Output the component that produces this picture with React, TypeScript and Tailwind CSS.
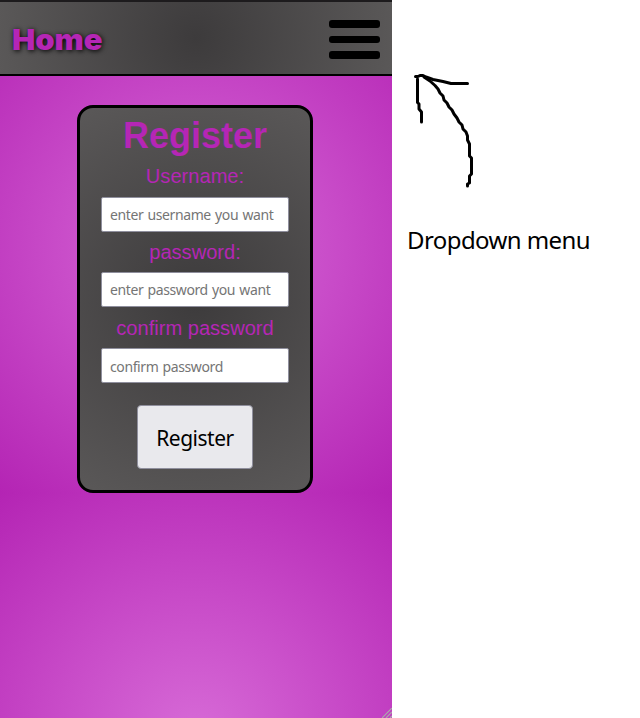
import React from "react";

function Field({
  label,
  placeholder,
  className,
  inputClass,
}: {
  label: string;
  placeholder: string;
  className: string;
  inputClass: string;
}) {
  return (
    <label className={`flex w-[188px] flex-col items-center ${className}`}>
      <span className="whitespace-nowrap text-[20.1px] leading-[23px] text-[#b526b5]">{label}</span>
      <input
        placeholder={placeholder}
        className={`h-[35px] w-full rounded-[2px] border border-[#8f8f9d] bg-white px-2 font-['Noto_Sans',sans-serif] text-[14px] tracking-[-0.4px] [word-spacing:1px] placeholder:text-[#757575] ${inputClass}`}
      />
    </label>
  );
}

export default function App() {
  return (
    <div className="flex h-[718px] w-[640px] overflow-hidden bg-white font-['Liberation_Sans',Arial,sans-serif]">
      <main className="relative h-full w-[392px] shrink-0 bg-[radial-gradient(circle,#d76bd7_0%,#c84bc8_45%,#b424b4_100%)] bg-[length:392px_493px]">
        <header className="flex h-[76px] items-center justify-between border-y-2 border-t-[#1d1b1d] border-b-black bg-[radial-gradient(circle,#3d3b3c,#5a5858)] pl-3 pr-3">
          <a className="origin-left scale-x-[1.075] pt-1 font-['Inter',sans-serif] text-[28.8px] font-black leading-none text-[#b526b5] [text-shadow:1px_1px_5px_black]">Home</a>
          <button aria-label="Menu" className="flex w-[51px] flex-col gap-2 pt-0.5">
            <span className="h-2 rounded-[3px] bg-black" />
            <span className="h-[7px] rounded-[3px] bg-black" />
            <span className="h-2 rounded-[3px] bg-black" />
          </button>
        </header>
        <form className="ml-[77px] mt-[29px] flex h-[388px] w-[236px] flex-col items-center rounded-[16px] border-[3px] border-black bg-[radial-gradient(circle,#3d3b3c,#5a5858)]">
          <h1 className="mt-[7px] text-[36px] font-bold leading-[41px] text-[#b526b5]">Register</h1>
          <Field label="Username:" placeholder="enter username you want" className="mt-[9px]" inputClass="mt-[9px] pb-px" />
          <Field label="password:" placeholder="enter password you want" className="mt-[9px]" inputClass="mt-2 pb-px" />
          <Field label="confirm password" placeholder="confirm password" className="mt-[10px]" inputClass="mt-2 pt-px" />
          <button type="button" className="mt-[22px] h-16 w-[116px] rounded-[4px] border border-[#8f8f9d] bg-[#e9e9ed] pt-[3px] font-['Noto_Sans',sans-serif] text-[21px] tracking-[-0.5px] text-black">Register</button>
        </form>
        <svg className="absolute bottom-0 right-0" width="10" height="10" viewBox="0 0 10 10" stroke="#aaa" strokeWidth="1.2">
          <path d="M0 10 10 0M4 10l6-6M8 10l2-2" />
        </svg>
      </main>
      <aside className="flex flex-col pl-[15px] pt-[70px]">
        <svg width="80" height="125" viewBox="407 70 80 125" fill="none" stroke="black" strokeWidth="3" strokeLinecap="round" strokeLinejoin="round">
          <path d="M415.500 76.500H418L420 75.500H423L426 77 433 79.500 443 81.500 451 83.500H467.500" />
          <path d="M417.500 79V102.500L419 104V109L421.500 112V122" />
          <path d="M424 77 430 81 435 85.500 438 89 440 93 443 96 444 100 447 103 449 107 452 110 454 114 457 118 459 122 462 125 463 129 466 132 467.500 136V140L469.500 144V156L471.500 158V174L469.500 176V183L467.500 184V186" />
        </svg>
        <p className="mt-[29px] whitespace-nowrap font-['Noto_Sans',sans-serif] text-[24px] leading-8 tracking-[-0.58px] text-black">Dropdown menu</p>
      </aside>
    </div>
  );
}
